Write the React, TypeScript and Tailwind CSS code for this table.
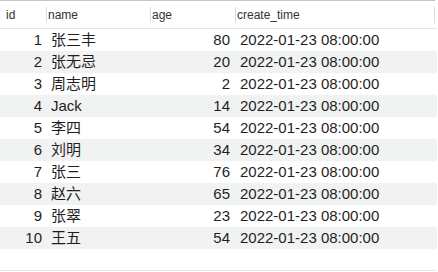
const rows: [number, string, number][] = [
  [1, '张三丰', 80],
  [2, '张无忌', 20],
  [3, '周志明', 2],
  [4, 'Jack', 14],
  [5, '李四', 54],
  [6, '刘明', 34],
  [7, '张三', 76],
  [8, '赵六', 65],
  [9, '张翠', 23],
  [10, '王五', 54],
]

function Sep() {
  return <div className="h-[16px] w-px bg-[#dcdcdc] shrink-0" />
}

export default function App() {
  return (
    <div
      className="w-[438px] h-[272px] bg-white overflow-hidden text-[#1f1f1f]"
      style={{ fontFamily: '"Liberation Sans", "Noto Sans CJK SC", sans-serif' }}
    >
      {/* top edge */}
      <div className="w-[435px] h-px bg-[#c6c6c6]" />

      {/* header */}
      <div className="flex h-[28px] w-[437px] items-center border-b border-[#e3e3e3] text-[12px] text-[#333]">
        <div className="w-[46px] pl-[6px] shrink-0">id</div>
        <div className="w-[104px] flex items-center shrink-0">
          <Sep />
          <span className="ml-[1px]">name</span>
        </div>
        <div className="w-[85px] flex items-center shrink-0">
          <Sep />
          <span className="ml-[1px]">age</span>
        </div>
        <div className="w-[199px] flex items-center shrink-0">
          <Sep />
          <span className="ml-[1px]">create_time</span>
        </div>
        <Sep />
      </div>

      {/* rows */}
      {rows.map(([id, name, age], i) => (
        <div
          key={id}
          className={`flex h-[22px] w-[437px] items-center text-[15px] ${i % 2 === 1 ? 'bg-[#f1f2f2]' : ''}`}
        >
          <div className="w-[46px] pr-[4px] text-right shrink-0">{id}</div>
          <div className="w-[104px] pl-[5px] shrink-0">{name}</div>
          <div className="w-[85px] pr-[5px] text-right shrink-0">{age}</div>
          <div className="w-[199px] pl-[5px] shrink-0">2022-01-23 08:00:00</div>
        </div>
      ))}

      {/* bottom edge */}
      <div className="mt-[21px] w-[437px] h-px bg-[#e6e6e6]" />
    </div>
  )
}
